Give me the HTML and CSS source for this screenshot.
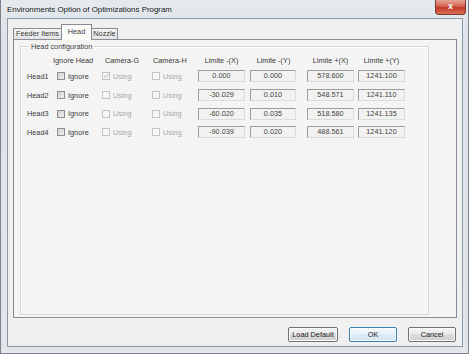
FILE: index.html
```html
<!DOCTYPE html>
<html lang="en">
<head>
    <meta charset="UTF-8">
    <title>Environments Option of Optimizations Program</title>
    <link rel="stylesheet" href="styles.css">
</head>
<body>
    <div class="window">
        <div class="titlebar">
            <span class="title">Environments Option of Optimizations Program</span>
            <div class="close">x</div>
        </div>
        <div class="client">
            <div class="tab-strip">
                <div class="tab tab-feeder">Feeder Items</div>
                <div class="tab tab-head active">Head</div>
                <div class="tab tab-nozzle">Nozzle</div>
            </div>
            <div class="tab-panel">
                <fieldset class="group">
                    <legend>Head configuration</legend>
                    <div class="grid">
                        <div></div>
                        <div class="hdr">Ignore Head</div>
                        <div class="hdr hdr-g">Camera-G</div>
                        <div class="hdr hdr-h">Camera-H</div>
                        <div class="hdr hdr-box">Limite -(X)</div>
                        <div class="hdr hdr-box">Limite -(Y)</div>
                        <div class="hdr hdr-box">Limite +(X)</div>
                        <div class="hdr hdr-box">Limite +(Y)</div>

                        <div class="name">Head1</div>
                        <label class="chk chk-ignore"><span class="box"></span>Ignore</label>
                        <label class="chk disabled"><span class="box checked"><svg viewBox="0 0 8 8"><polyline points="1.5,4 3.2,6 6.5,1.5"/></svg></span>Using</label>
                        <label class="chk disabled"><span class="box"></span>Using</label>
                        <div class="field">0.000</div>
                        <div class="field narrow">0.000</div>
                        <div class="field">578.600</div>
                        <div class="field">1241.100</div>

                        <div class="name">Head2</div>
                        <label class="chk chk-ignore"><span class="box"></span>Ignore</label>
                        <label class="chk disabled"><span class="box"></span>Using</label>
                        <label class="chk disabled"><span class="box"></span>Using</label>
                        <div class="field">-30.029</div>
                        <div class="field narrow">0.010</div>
                        <div class="field">548.571</div>
                        <div class="field">1241.110</div>

                        <div class="name">Head3</div>
                        <label class="chk chk-ignore"><span class="box"></span>Ignore</label>
                        <label class="chk disabled"><span class="box"></span>Using</label>
                        <label class="chk disabled"><span class="box"></span>Using</label>
                        <div class="field">-60.020</div>
                        <div class="field narrow">0.035</div>
                        <div class="field">518.580</div>
                        <div class="field">1241.135</div>

                        <div class="name">Head4</div>
                        <label class="chk chk-ignore"><span class="box"></span>Ignore</label>
                        <label class="chk disabled"><span class="box"></span>Using</label>
                        <label class="chk disabled"><span class="box"></span>Using</label>
                        <div class="field">-90.039</div>
                        <div class="field narrow">0.020</div>
                        <div class="field">488.561</div>
                        <div class="field">1241.120</div>
                    </div>
                </fieldset>
            </div>
            <div class="buttons">
                <button class="btn btn-load">Load Default</button>
                <button class="btn btn-ok">OK</button>
                <button class="btn">Cancel</button>
            </div>
        </div>
    </div>
</body>
</html>
```

FILE: styles.css
```css
html, body {
    margin: 0;
    padding: 0;
}
body {
    width: 469px;
    height: 354px;
    overflow: hidden;
    font-family: 'Liberation Sans', Arial, sans-serif;
    font-size: 7.3px;
    color: #3a3a3a;
    background: #d3dae2;
}
.window {
    height: 354px;
    box-sizing: border-box;
    display: flex;
    flex-direction: column;
    padding: 0 5px 6px 6px;
    border: 1px solid #7a838c;
    border-top: none;
    background: linear-gradient(#e6eaee, #dce2e8 40px, #e2e6ea);
}
.titlebar {
    height: 18px;
    display: flex;
    align-items: center;
    justify-content: space-between;
}
.title {
    font-size: 7.9px;
    color: #1a1a1a;
    padding-top: 1px;
}
.close {
    width: 31px;
    height: 15px;
    align-self: flex-start;
    margin-right: -3px;
    box-sizing: border-box;
    border: 1px solid #7d3a30;
    border-top: none;
    border-radius: 0 0 4px 4px;
    background: linear-gradient(#e8a595, #d2604c 45%, #c23a26 55%, #d9705a);
    color: #fff;
    font-weight: bold;
    font-size: 9px;
    line-height: 13px;
    text-align: center;
}
.client {
    flex: 1;
    display: flex;
    flex-direction: column;
    background: #f0f0f0;
    border: 1px solid #8c99a6;
}
.tab-strip {
    display: flex;
    align-items: flex-end;
    height: 15px;
    margin: 5px 5px 0 5px;
}
.tab {
    box-sizing: border-box;
    height: 11px;
    border: 1px solid #898c95;
    border-bottom: none;
    background: linear-gradient(#f3f3f3, #e4e4e4);
    line-height: 10px;
    text-align: center;
    margin-right: -1px;
}
.tab-feeder { width: 49px; }
.tab-head { width: 31px; }
.tab-nozzle { width: 27px; }
.tab.active {
    height: 16px;
    margin-bottom: -1px;
    background: #fff;
    line-height: 13px;
    position: relative;
    z-index: 1;
}
.tab-panel {
    height: 279px;
    box-sizing: border-box;
    margin: 0 5px;
    border: 1px solid #898c95;
    background: #f4f4f4;
    display: flex;
    flex-direction: column;
}
.group {
    flex: 1;
    margin: 2px 27px 2px 6px;
    padding: 0 0 0 6px;
    border: 1px solid #d5d9dc;
    box-shadow: inset 1px 1px 0 #fff;
    min-width: 0;
}
.group legend {
    padding: 0 2px;
    margin-left: 2px;
    line-height: 9px;
}
.grid {
    display: grid;
    grid-template-columns: 26px 48px 50px 47px 52px 57px 51px 47px;
    grid-template-rows: 13px repeat(4, 18.7px);
    align-items: center;
    margin-top: 3px;
}
.hdr { white-space: nowrap; }
.hdr-g { padding-left: 4px; }
.hdr-h { padding-left: 2px; }
.hdr-box { width: 47px; text-align: center; }
.name { white-space: nowrap; }
.chk {
    display: flex;
    align-items: center;
    gap: 3px;
    padding-left: 1px;
}
.chk-ignore { padding-left: 4px; }
.box {
    width: 8px;
    height: 8px;
    box-sizing: border-box;
    border: 1px solid #8f8f8f;
    background: linear-gradient(135deg, #cfcfcf, #f2f2f2);
    display: flex;
}
.chk.disabled { color: #a6a6a6; }
.chk.disabled .box {
    border-color: #c4c4c4;
    background: #f6f6f6;
}
.box svg {
    width: 6px;
    height: 6px;
    fill: none;
    stroke: #a9a9a9;
    stroke-width: 1.2;
}
.field {
    width: 47px;
    height: 12px;
    box-sizing: border-box;
    border: 1px solid;
    border-color: #9c9c9c #dcdcdc #dcdcdc #9c9c9c;
    background: #f2f2f2;
    text-align: center;
    line-height: 10px;
    color: #444;
}
.field.narrow { width: 46px; }
.buttons {
    display: flex;
    justify-content: flex-end;
    gap: 11px;
    margin-top: 9px;
    padding-right: 6px;
}
.btn {
    width: 48px;
    height: 15px;
    padding: 0;
    font-family: inherit;
    font-size: 7.3px;
    color: #222;
    border: 1px solid #707070;
    border-radius: 2px;
    background: linear-gradient(#f4f4f4, #ebebeb 50%, #dddddd 50%, #cfcfcf);
    box-shadow: inset 0 0 0 1px #fcfcfc;
}
.btn-load { width: 50px; }
.btn-ok {
    border-color: #3c7fb1;
    background: linear-gradient(#f4f9fc, #e6f2fa 50%, #dcecf8 50%, #d2e6f4);
}
```
